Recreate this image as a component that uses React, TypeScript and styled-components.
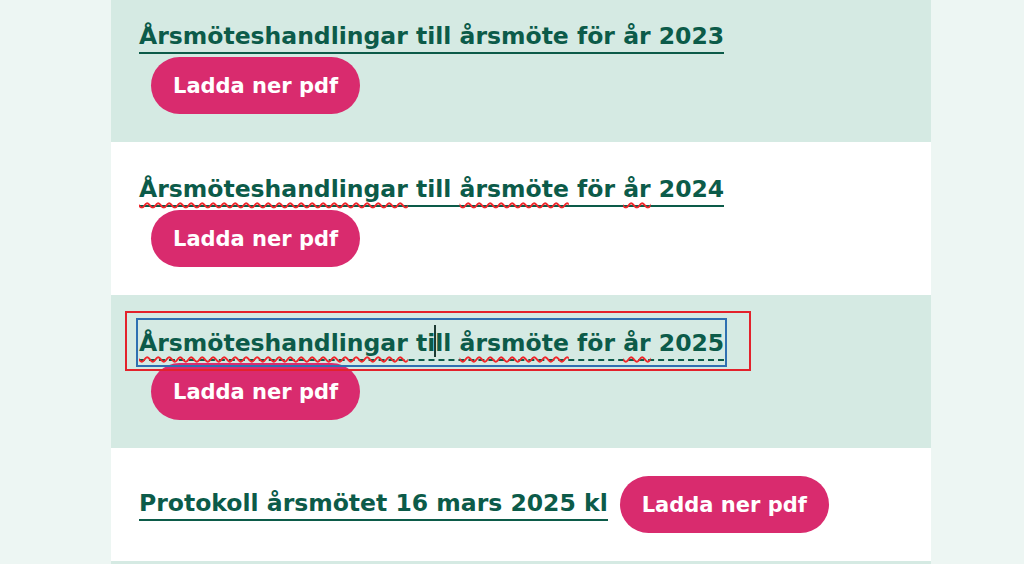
import React from 'react';
import styled, { createGlobalStyle } from 'styled-components';

type Doc = {
  title: React.ReactNode;
  tone: 'mint' | 'white';
  editing?: boolean;
};

const GlobalStyle = createGlobalStyle`
  html, body {
    margin: 0;
    padding: 0;
    background: #edf6f3;
    overflow: hidden;
  }
  body {
    font-family: 'DejaVu Sans', 'Liberation Sans', sans-serif;
  }
`;

const Typo = styled.span`
  text-decoration: underline wavy #f0262b;
  text-decoration-thickness: 1.5px;
  text-underline-offset: 5px;
  text-decoration-skip-ink: none;
`;

const docs: Doc[] = [
  { title: 'Årsmöteshandlingar till årsmöte för år 2023', tone: 'mint' },
  {
    title: (
      <>
        <Typo>Årsmöteshandlingar</Typo> till <Typo>årsmöte</Typo> för <Typo>år</Typo> 2024
      </>
    ),
    tone: 'white',
  },
  {
    title: (
      <>
        <Typo>Årsmöteshandlingar</Typo> ti
        <Caret />
        ll <Typo>årsmöte</Typo> för <Typo>år</Typo> 2025
      </>
    ),
    tone: 'mint',
    editing: true,
  },
  { title: 'Protokoll årsmötet 16 mars 2025 kl', tone: 'white' },
  { title: '', tone: 'mint' },
];

function Caret() {
  return <CaretMark />;
}

export default function App() {
  return (
    <>
      <GlobalStyle />
      <Page>
        <Column>
          {docs.map((doc, i) => (
            <Row key={i} tone={doc.tone}>
              {doc.title !== '' && (
                <>
                  <TitleWrap>
                    <Title href="#" dashed={doc.editing}>
                      {doc.title}
                    </Title>
                    {doc.editing && (
                      <>
                        <FocusBox />
                        <MarkBox />
                      </>
                    )}
                  </TitleWrap>
                  <PdfButton href="#">Ladda ner pdf</PdfButton>
                </>
              )}
            </Row>
          ))}
        </Column>
      </Page>
    </>
  );
}

const Page = styled.div`
  width: 1024px;
  height: 564px;
  display: flex;
  justify-content: flex-start;
  padding-left: 111px;
  box-sizing: border-box;
  overflow: hidden;
`;

const Column = styled.div`
  width: 820px;
  margin-top: -11px;
  display: flex;
  flex-direction: column;
`;

const Row = styled.div<{ tone: 'mint' | 'white' }>`
  background: ${({ tone }) => (tone === 'mint' ? '#d5eae3' : '#ffffff')};
  padding: 28px;
  display: flex;
  flex-wrap: wrap;
  align-items: center;
  flex-shrink: 0;
`;

const TitleWrap = styled.div`
  position: relative;
  height: 40px;
  display: flex;
  align-items: center;
`;

const Title = styled.a<{ dashed?: boolean }>`
  font-size: 23.5px;
  font-weight: 700;
  color: #0c5b49;
  text-decoration: none;
  white-space: nowrap;
  line-height: 30px;
  padding-bottom: 1px;
  border-bottom: 2px ${({ dashed }) => (dashed ? 'dashed' : 'solid')} #0c5b49;
`;

const CaretMark = styled.span`
  display: inline-block;
  width: 2px;
  height: 32px;
  margin: 0 -1px;
  vertical-align: -6px;
  background: #1d3b33;
`;

const FocusBox = styled.span`
  position: absolute;
  left: -3px;
  right: -3px;
  top: -5px;
  bottom: -4px;
  border: 2px solid #2f70b1;
  pointer-events: none;
`;

const MarkBox = styled.span`
  position: absolute;
  left: -14px;
  right: -27px;
  top: -12px;
  bottom: -8px;
  border: 2px solid #e3222b;
  pointer-events: none;
`;

const PdfButton = styled.a`
  margin-left: 12px;
  height: 57px;
  padding: 0 22px;
  display: inline-flex;
  align-items: center;
  border-radius: 29px;
  background: #d92b6e;
  color: #ffffff;
  font-size: 21px;
  font-weight: 700;
  text-decoration: none;
  white-space: nowrap;
`;
